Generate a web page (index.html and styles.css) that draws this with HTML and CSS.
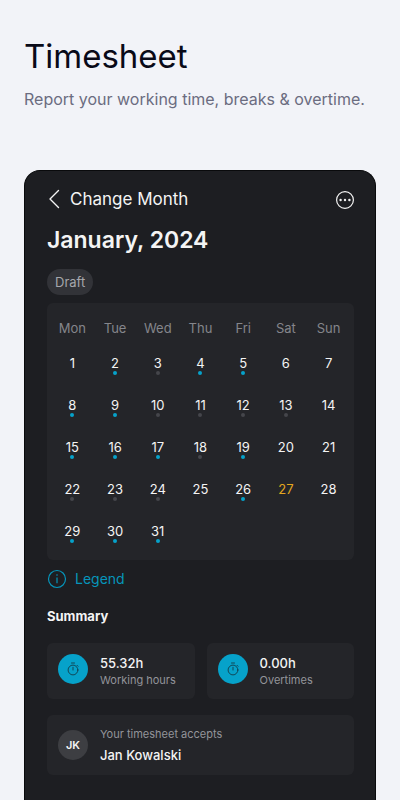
FILE: index.html
```html
<!DOCTYPE html>
<html lang="en">
<head>
<meta charset="utf-8">
<meta name="viewport" content="width=device-width, initial-scale=1">
<title>Timesheet</title>
<link rel="stylesheet" href="styles.css">
</head>
<body>
<header class="intro">
  <h1>Timesheet</h1>
  <p>Report your working time, breaks &amp; overtime.</p>
</header>
<main class="screen">
  <nav class="topbar">
    <button class="back" type="button">
      <svg width="12" height="20" viewBox="0 0 12 20" fill="none" stroke="currentColor" stroke-width="1.4" stroke-linecap="round" stroke-linejoin="round" aria-hidden="true"><path d="M10.5 1.5 2 10l8.500 8.500"/></svg>
      <span>Change Month</span>
    </button>
    <button class="more" type="button" aria-label="More options">
      <svg width="18" height="18" viewBox="0 0 18 18" aria-hidden="true"><circle cx="9" cy="9" r="8.400" fill="none" stroke="currentColor" stroke-width="1.200"/><g fill="currentColor"><circle cx="4.600" cy="9" r="1.200"/><circle cx="9" cy="9" r="1.200"/><circle cx="13.400" cy="9" r="1.200"/></g></svg>
    </button>
  </nav>
  <h2 class="month">January, 2024</h2>
  <span class="status">Draft</span>
  <section class="calendar">
    <table>
      <thead>
        <tr><th>Mon</th><th>Tue</th><th>Wed</th><th>Thu</th><th>Fri</th><th>Sat</th><th>Sun</th></tr>
      </thead>
      <tbody>
        <tr><td>1</td><td class="dot done">2</td><td class="dot">3</td><td class="dot done">4</td><td class="dot done">5</td><td>6</td><td>7</td></tr>
        <tr><td class="dot done">8</td><td class="dot done">9</td><td class="dot">10</td><td class="dot">11</td><td class="dot">12</td><td class="dot">13</td><td>14</td></tr>
        <tr><td class="dot done">15</td><td class="dot done">16</td><td class="dot done">17</td><td class="dot">18</td><td class="dot done">19</td><td>20</td><td>21</td></tr>
        <tr><td class="dot">22</td><td class="dot">23</td><td class="dot">24</td><td>25</td><td class="dot done">26</td><td class="today">27</td><td>28</td></tr>
        <tr><td class="dot done">29</td><td class="dot done">30</td><td class="dot done">31</td><td></td><td></td><td></td><td></td></tr>
      </tbody>
    </table>
  </section>
  <button class="legend" type="button">
    <svg width="20" height="20" viewBox="0 0 20 20" fill="none" stroke="currentColor" aria-hidden="true"><circle cx="10" cy="10" r="8.500" stroke-width="1.200"/><path d="M10 8.500v5.700" stroke-width="1.200"/><circle cx="10" cy="6" r=".8" fill="currentColor" stroke="none"/></svg>
    <span>Legend</span>
  </button>
  <h3 class="summary-title">Summary</h3>
  <section class="stats">
    <article class="card">
      <span class="badge clock"><svg width="14" height="14" viewBox="0 0 14 14" fill="none" stroke="currentColor" stroke-width=".9" stroke-linecap="round" aria-hidden="true"><circle cx="7" cy="8" r="4.900"/><path d="M5.500 1h3M7 5.300V8M11 3.300l1 1"/></svg></span>
      <div><p class="value">55.32h</p><p class="label">Working hours</p></div>
    </article>
    <article class="card">
      <span class="badge clock"><svg width="14" height="14" viewBox="0 0 14 14" fill="none" stroke="currentColor" stroke-width=".9" stroke-linecap="round" aria-hidden="true"><circle cx="7" cy="8" r="4.900"/><path d="M5.500 1h3M7 5.300V8M11 3.300l1 1"/></svg></span>
      <div><p class="value">0.00h</p><p class="label">Overtimes</p></div>
    </article>
  </section>
  <section class="card approver">
    <span class="badge avatar">JK</span>
    <div><p class="label">Your timesheet accepts</p><p class="value">Jan Kowalski</p></div>
  </section>
</main>
</body>
</html>
```
FILE: styles.css
```css
* {
  box-sizing: border-box;
}

body {
  margin: 0;
  min-height: 100vh;
  padding: 0 24px;
  display: flex;
  flex-direction: column;
  background: #f2f3f8;
  font-family: Inter, "Liberation Sans", sans-serif;
}

h1, h2, h3, p {
  margin: 0;
}

button {
  padding: 0;
  border: 0;
  background: none;
  color: inherit;
  font: inherit;
  cursor: pointer;
  display: flex;
  align-items: center;
}

svg {
  display: block;
  flex: none;
}

.intro {
  padding: 36px 0 60px;
}

.intro h1 {
  font-size: 33px;
  font-weight: 400;
  line-height: 40px;
  color: #090a18;
}

.intro p {
  margin-top: 12px;
  font-size: 16px;
  line-height: 22px;
  color: #6b6c80;
  white-space: nowrap;
}

.screen {
  flex: 1;
  padding: 18px 21px 24px 22px;
  border: 1px solid #090a0c;
  border-bottom: 0;
  border-radius: 16px 16px 0 0;
  background: #1d1e22;
  color: #f4f4f4;
}

.topbar {
  display: flex;
  justify-content: space-between;
  align-items: center;
}

.back {
  gap: 10px;
  padding-left: 1px;
  font-size: 17px;
  line-height: 20px;
}

.month {
  margin-top: 16px;
  font-size: 23px;
  font-weight: 600;
  line-height: 30px;
}

.status {
  display: block;
  width: max-content;
  margin-top: 14px;
  padding: 0 8px;
  border-radius: 13px;
  background: #323338;
  color: #a6a7ac;
  font-size: 13px;
  line-height: 26px;
}

.calendar {
  margin-top: 8px;
  padding: 7px 4px 4px;
  border-radius: 6px;
  background: #242529;
}

table {
  width: 100%;
  border-collapse: collapse;
  table-layout: fixed;
  text-align: center;
}

th {
  height: 36px;
  padding: 0;
  color: #85868b;
  font-size: 13px;
  font-weight: 400;
  line-height: 16px;
}

td {
  height: 42px;
  padding: 9px 0 0;
  vertical-align: top;
  font-size: 13px;
  line-height: 16px;
}

.dot::after {
  content: "";
  display: block;
  width: 4px;
  height: 4px;
  margin: 0 auto;
  border-radius: 50%;
  background: #45464b;
}

.done::after {
  background: #06a2ca;
}

.today {
  color: #e3a71f;
}

.more {
  padding-top: 1px;
}

.legend {
  gap: 8px;
  margin-top: 9px;
  color: #0695bb;
  font-size: 14px;
  line-height: 20px;
}

.summary-title {
  margin-top: 18px;
  font-size: 13px;
  font-weight: 700;
  line-height: 18px;
}

.stats {
  display: grid;
  grid-template-columns: 1fr 1fr;
  gap: 12px;
  margin-top: 18px;
}

.card {
  display: flex;
  align-items: center;
  gap: 12px;
  padding: 11px;
  border-radius: 6px;
  background: #242529;
}

.stats .card {
  align-items: flex-start;
}

.approver {
  margin-top: 16px;
}

.badge {
  display: flex;
  flex: none;
  align-items: center;
  justify-content: center;
  width: 30px;
  height: 30px;
  border-radius: 50%;
}

.clock {
  background: #06a2ca;
  color: #123c48;
}

.avatar {
  background: #3d3e42;
  font-size: 11px;
  font-weight: 600;
}

.value {
  font-size: 13px;
  font-weight: 500;
  line-height: 18px;
}

.label {
  color: #93949a;
  font-size: 11px;
  line-height: 16px;
  white-space: nowrap;
}

.approver .label + .value {
  margin-top: 4px;
}
```
